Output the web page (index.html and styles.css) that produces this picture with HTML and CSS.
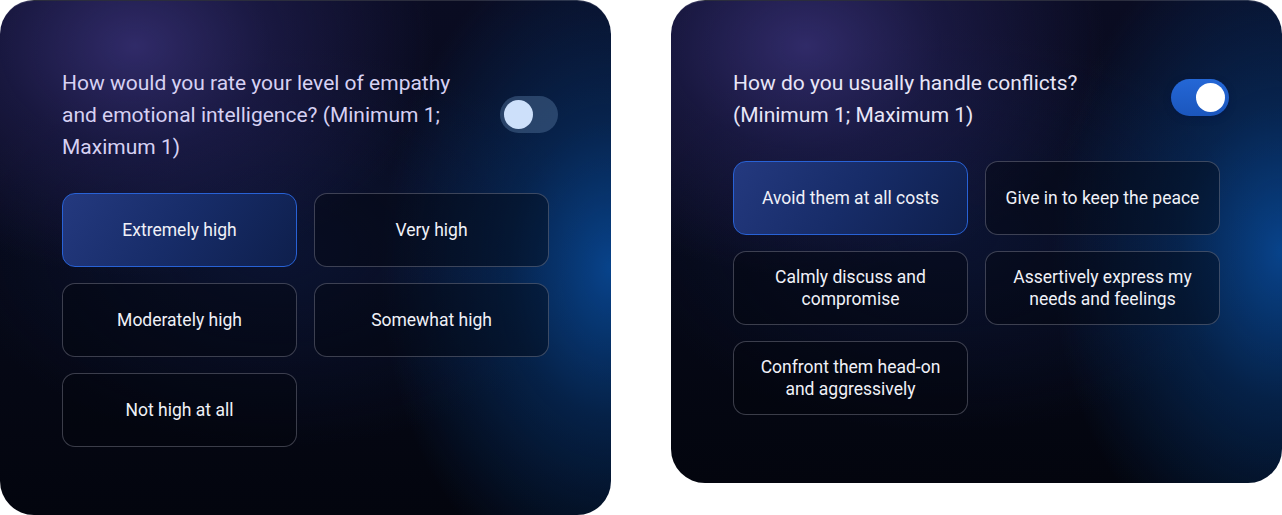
FILE: index.html
```html
<!DOCTYPE html>
<html lang="en">
<head>
<meta charset="utf-8">
<title>Questions</title>
<link rel="stylesheet" href="styles.css">
</head>
<body>
<main class="board">
  <section class="card card-tall">
    <header class="card-head">
      <h2 class="question question-dim">How would you rate your level of empathy and emotional intelligence? (Minimum 1; Maximum 1)</h2>
      <span class="toggle toggle-off" role="switch" aria-checked="false"><span class="knob"></span></span>
    </header>
    <div class="options">
      <button class="option option-selected">Extremely high</button>
      <button class="option">Very high</button>
      <button class="option">Moderately high</button>
      <button class="option">Somewhat high</button>
      <button class="option">Not high at all</button>
    </div>
  </section>
  <section class="card">
    <header class="card-head">
      <h2 class="question">How do you usually handle conflicts? (Minimum 1; Maximum 1)</h2>
      <span class="toggle toggle-on" role="switch" aria-checked="true"><span class="knob"></span></span>
    </header>
    <div class="options">
      <button class="option option-selected">Avoid them at all costs</button>
      <button class="option">Give in to keep the peace</button>
      <button class="option">Calmly discuss and compromise</button>
      <button class="option">Assertively express my needs and feelings</button>
      <button class="option">Confront them head-on and aggressively</button>
    </div>
  </section>
</main>
</body>
</html>
```
FILE: styles.css
```css
* { box-sizing: border-box; }

html, body {
  margin: 0;
  padding: 0;
  background: #ffffff;
}

body {
  font-family: Roboto, "Noto Sans", "Liberation Sans", sans-serif;
  color: #e8e9f4;
}

.board {
  display: flex;
  align-items: flex-start;
  gap: 60px;
}

.card {
  width: 611px;
  flex: 0 0 611px;
  padding: 66px 53px 68px 62px;
  border-radius: 34px;
  border-top: 1px solid rgba(120, 120, 150, 0.35);
  background:
    radial-gradient(ellipse 300px 230px at 135px 45px, rgba(50, 44, 108, 0.95) 0%, rgba(40, 36, 95, 0.5) 45%, rgba(30, 30, 80, 0) 100%),
    radial-gradient(ellipse 230px 330px at 100% 52%, rgba(8, 70, 145, 0.95) 0%, rgba(6, 55, 115, 0.55) 45%, rgba(5, 40, 90, 0) 100%),
    radial-gradient(ellipse 320px 200px at 45% 48%, rgba(14, 26, 66, 0.6) 0%, rgba(14, 26, 66, 0) 100%),
    linear-gradient(180deg, #0a0c22 0%, #060918 55%, #03050e 100%);
}

.card-head {
  display: flex;
  align-items: center;
  justify-content: space-between;
  margin-bottom: 30px;
}

.question {
  margin: 0;
  width: 410px;
  font-size: 21px;
  line-height: 32px;
  font-weight: 400;
  color: #e8e6f8;
}

.question-dim {
  color: #d6d1f3;
}

.toggle {
  position: relative;
  display: block;
  width: 58px;
  height: 37px;
  border-radius: 19px;
  flex: 0 0 auto;
  margin-top: -2px;
}

.toggle-off {
  background: rgba(70, 100, 140, 0.55);
}

.toggle-on {
  background: linear-gradient(180deg, #2467d6 0%, #1b56bd 100%);
  box-shadow: 0 2px 6px rgba(0, 20, 70, 0.5);
  margin-top: -4px;
}

.knob {
  position: absolute;
  top: 4px;
  width: 29px;
  height: 29px;
  border-radius: 50%;
}

.toggle-off .knob {
  left: 4px;
  background: #cde0fa;
}

.toggle-on .knob {
  right: 4px;
  background: #ffffff;
}

.options {
  display: grid;
  grid-template-columns: 235px 235px;
  grid-auto-rows: 74px;
  column-gap: 17px;
  row-gap: 16px;
}

.option {
  display: flex;
  align-items: center;
  justify-content: center;
  padding: 0 14px;
  border: 1.5px solid rgba(160, 162, 178, 0.36);
  border-radius: 13px;
  background: rgba(2, 4, 12, 0.4);
  font-family: Roboto, "Noto Sans", "Liberation Sans", sans-serif;
  font-size: 17.5px;
  line-height: 22px;
  font-weight: 400;
  color: #f0f1f8;
  text-align: center;
}

.option-selected {
  border-color: #2862d6;
  background: linear-gradient(125deg, #24397f 0%, #172c68 50%, #0e1f4c 100%);
}
```
